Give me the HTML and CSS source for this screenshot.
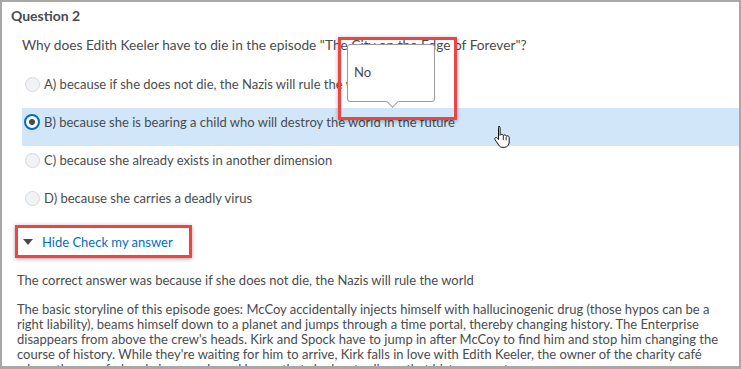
FILE: index.html
```html
<!DOCTYPE html>
<html lang="en">
<head>
    <meta charset="UTF-8">
    <meta name="viewport" content="width=device-width, initial-scale=1.0">
    <title>Question 2</title>
    <link rel="stylesheet" href="styles.css">
</head>
<body>

<div class="frame">
    <h2 class="q-title">Question 2</h2>
    <p class="q-text">Why does Edith Keeler have to die in the episode "The City on the Edge of Forever"?</p>

    <ul class="options">
        <li class="option"><span class="radio"></span>A) because if she does not die, the Nazis will rule the world</li>
        <li class="option selected"><span class="radio checked"></span>B) because she is bearing a child who will destroy the world in the future</li>
        <li class="option"><span class="radio"></span>C) because she already exists in another dimension</li>
        <li class="option"><span class="radio"></span>D) because she carries a deadly virus</li>
    </ul>

    <div class="toggle-row">
        <a class="toggle" href="#"><span class="caret"></span>Hide Check my answer</a>
    </div>

    <p class="answer">The correct answer was because if she does not die, the Nazis will rule the world</p>
    <p class="story">The basic storyline of this episode goes: McCoy accidentally injects himself with hallucinogenic drug (those hypos can be a right liability), beams himself down to a planet and jumps through a time portal, thereby changing history. The Enterprise disappears from above the crew's heads. Kirk and Spock have to jump in after McCoy to find him and stop him changing the course of history. While they're waiting for him to arrive, Kirk falls in love with Edith Keeler, the owner of the charity café where they are fed and given work, and learns that she has to die so that history can stay on course.</p>

    <!-- tooltip over option B -->
    <div class="tip">No</div>
    <div class="mark"></div>

    <svg class="cursor" width="20" height="24" viewBox="0 0 20 24">
        <path d="M5.5 1.5c1 0 1.6.7 1.6 1.6v7.2c.3-.6.9-1 1.6-1 .9 0 1.5.6 1.6 1.3.3-.4.8-.7 1.4-.7.9 0 1.5.6 1.6 1.4.3-.3.7-.5 1.2-.5 1 0 1.7.8 1.7 1.8v4.4c0 2.8-1.9 5.3-4.9 5.3H9.2c-1.6 0-2.6-.9-3.4-2.1L2.1 14.8c-.5-.8-.3-1.7.4-2.1.7-.4 1.5-.2 2 .5l1 1.4V3.1c0-.9.6-1.6 1-1.6z" fill="#fff" stroke="#111" stroke-width="1"/>
        <path d="M10.3 11v4M13.1 12v3.4" stroke="#111" stroke-width=".9"/>
    </svg>
</div>

</body>
</html>
```

FILE: styles.css
```css
body {
    margin: 0;
    font-family: Lato, "Open Sans", sans-serif;
    color: #494c4e;
    background-color: #fff;
}
.frame {
    position: relative;
    height: 369px;
    box-sizing: border-box;
    border: 2px solid #a8a8a8;
    border-bottom-width: 3px;
    overflow: hidden;
}
.q-title {
    margin: 0;
    padding: 6px 0 0 9px;
    font-size: 14px;
    font-weight: bold;
    line-height: 16px;
}
.q-text {
    margin: 0;
    padding: 12px 0 0 20px;
    font-size: 13.7px;
    line-height: 17px;
}
.options {
    list-style: none;
    margin: 0;
    padding: 17px 0 0 20px;
}
.option {
    display: flex;
    align-items: flex-start;
    height: 38px;
    box-sizing: border-box;
    padding-top: 6px;
    font-size: 13px;
    line-height: 17px;
}
.option.selected {
    background-color: #d1e6f9;
}
.radio {
    width: 13px;
    height: 13px;
    margin: 1px 4px 0 3px;
    border: 1px solid #d3d9e3;
    border-radius: 50%;
    background-color: #f1f2f4;
    position: relative;
}
.radio.checked {
    width: 12px;
    height: 12px;
    margin: 0 4px 0 2px;
    border: 2px solid #006fbf;
    background-color: #fff;
}
.radio.checked::after {
    content: "";
    position: absolute;
    left: 3px;
    top: 3px;
    width: 6px;
    height: 6px;
    border-radius: 50%;
    background-color: #494c4e;
}
.toggle-row {
    display: flex;
    padding: 3px 0 0 13px;
}
.toggle {
    display: flex;
    align-items: center;
    height: 27px;
    padding: 0 16px 0 5px;
    border: 3px solid #ee4444;
    box-shadow: 0 1px 4px rgba(0,0,0,0.35);
    color: #006fbf;
    font-size: 13px;
    text-decoration: none;
}
.caret {
    width: 0;
    height: 0;
    margin-right: 9px;
    border-left: 5px solid transparent;
    border-right: 5px solid transparent;
    border-top: 6px solid #494c4e;
}
.answer {
    margin: 0;
    padding: 13px 0 0 15px;
    font-size: 13px;
    line-height: 19px;
}
.story {
    margin: 0;
    padding: 12px 12px 0 15px;
    font-size: 13px;
    line-height: 15px;
}
.tip {
    position: absolute;
    left: 345px;
    top: 42px;
    width: 88px;
    height: 58px;
    box-sizing: border-box;
    padding: 19px 0 0 6px;
    background-color: #fff;
    border: 1px solid #9a9a9a;
    border-radius: 3px;
    font-size: 13px;
}
.tip::after {
    content: "";
    position: absolute;
    left: 40px;
    bottom: -5px;
    width: 8px;
    height: 8px;
    background-color: #fff;
    border-right: 1px solid #9a9a9a;
    border-bottom: 1px solid #9a9a9a;
    transform: rotate(45deg);
}
.mark {
    position: absolute;
    left: 336px;
    top: 35px;
    width: 119px;
    height: 83px;
    box-sizing: border-box;
    border: 3px solid #ee4444;
    box-shadow: 0 1px 4px rgba(0,0,0,0.35);
}
.cursor {
    position: absolute;
    left: 491px;
    top: 123px;
}
```
